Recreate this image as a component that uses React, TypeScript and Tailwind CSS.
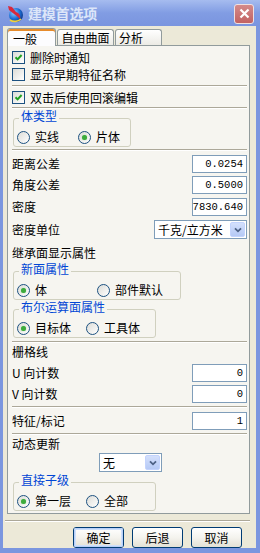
import React from "react";

const font = "font-['Noto_Sans_CJK_SC','Noto_Sans',sans-serif]";

function CheckBox({ checked }: { checked: boolean }) {
  return (
    <span className="relative w-[13px] h-[13px] shrink-0 border border-[#1c5180] bg-gradient-to-br from-[#dcdcd7] to-white">
      {checked && (
        <svg className="absolute left-[1px] top-[1px]" width="9" height="9" viewBox="0 0 9 9">
          <path d="M1.5 4.2 L3.6 6.4 L7.6 2" stroke="#21a121" strokeWidth="2" fill="none" />
        </svg>
      )}
    </span>
  );
}

function Check({ label, checked }: { label: string; checked: boolean }) {
  return (
    <div className="h-[17px] flex items-center pl-[4px] gap-[5px]">
      <CheckBox checked={checked} />
      <span className="leading-none">{label}</span>
    </div>
  );
}

function Radio({ label, checked, w }: { label: string; checked: boolean; w: string }) {
  return (
    <div className={`flex items-center gap-[5px] ${w}`}>
      <span className="relative w-[13px] h-[13px] rounded-full border border-[#1c5180] bg-gradient-to-br from-[#dcdcd7] to-white flex items-center justify-center shrink-0">
        {checked && <span className="w-[5px] h-[5px] rounded-full bg-[#3dab3d] shadow-[0_0_1px_#7fd07f]" />}
      </span>
      <span className="leading-none">{label}</span>
    </div>
  );
}

function Group({ title, w, mt, children }: { title: string; w: string; mt: string; children: React.ReactNode }) {
  return (
    <div className={`relative ${w} ${mt} ml-[5px] h-[29px] border border-[#d0d0bf] rounded-[3px] pt-[9px] pl-[3px] flex`}>
      <span className="absolute left-[5px] top-[-9px] px-[2px] bg-[#f6f5f0] text-[#0046d5] leading-none">{title}</span>
      {children}
    </div>
  );
}

function Sep({ mt }: { mt: string }) {
  return <div className={`${mt} ml-[4px] mr-[1px] h-[2px] border-t border-[#aca899] border-b border-b-white`} />;
}

function InputRow({ label, value, mt }: { label: string; value: string; mt: string }) {
  return (
    <div className={`flex items-center justify-between ${mt} pl-[4px] pr-[1px]`}>
      <span className="leading-none">{label}</span>
      <div className="w-[55px] h-[18px] border border-[#7f9db9] bg-white flex items-center justify-end pr-[3px] font-['Liberation_Mono',monospace] text-[10.5px] leading-none">
        {value}
      </div>
    </div>
  );
}

function Select({ value, w, h }: { value: string; w: string; h: string }) {
  return (
    <div className={`${w} ${h} border border-[#7f9db9] bg-white flex items-center justify-between pl-[3px] pr-[1px]`}>
      <span className="leading-none">{value}</span>
      <span className="w-[15px] h-[calc(100%-2px)] rounded-[2px] bg-gradient-to-b from-[#d4e0fc] to-[#b5c9f5] border border-[#c3d3fd] flex items-center justify-center">
        <svg width="8" height="6" viewBox="0 0 8 6">
          <path d="M1 1.3 L4 4.3 L7 1.3" stroke="#4d6185" strokeWidth="1.8" fill="none" />
        </svg>
      </span>
    </div>
  );
}

function Btn({ label, def }: { label: string; def?: boolean }) {
  return (
    <div className="w-[51px] h-[21px] rounded-[3px] border border-[#003c74] bg-gradient-to-b from-white via-[#f4f3ee] to-[#e3e1d5] flex items-center justify-center">
      <div className={`w-full h-full rounded-[2px] flex items-center justify-center leading-none ${def ? "shadow-[inset_0_0_0_1px_#b8d0f8,inset_0_0_0_2px_#cee0fb]" : ""}`}>
        {label}
      </div>
    </div>
  );
}

function Icon() {
  return (
    <svg width="17" height="19" viewBox="0 0 17 19">
      <defs>
        <radialGradient id="g" cx="0.35" cy="0.35" r="0.7">
          <stop offset="0" stopColor="#8fd0ff" />
          <stop offset="0.6" stopColor="#1d6fd6" />
          <stop offset="1" stopColor="#0c3a8a" />
        </radialGradient>
      </defs>
      <circle cx="9" cy="11" r="7" fill="url(#g)" />
      <path d="M13 15 C14 12 12 9 9 8 L5 3 L1 2 L2 6 L7 10 C9 11 11 13 13 15Z" fill="#d8283c" />
      <path d="M3 16 C6 18 11 18 14 15" stroke="#f2d23a" strokeWidth="1.6" fill="none" />
    </svg>
  );
}

export default function App() {
  return (
    <div className={`w-[260px] h-[553px] bg-[#7b96df] flex flex-col text-[12px] text-black ${font}`}>
      <div className="h-[26px] shrink-0 bg-gradient-to-b from-[#a6bcef] via-[#819ce3] to-[#7a95df] flex items-center pl-[7px] pr-[6px]">
        <Icon />
        <span className="ml-[4px] text-[14px] font-bold text-[#dce6f9] leading-none tracking-[-0.2px]">建模首选项</span>
        <div className="ml-auto mt-[1px] w-[20px] h-[20px] rounded-[3px] border border-[#f0e0e0] bg-gradient-to-b from-[#d48a8a] to-[#c26262] flex items-center justify-center">
          <svg width="11" height="11" viewBox="0 0 11 11">
            <path d="M1.5 1.5 L9.5 9.5 M9.5 1.5 L1.5 9.5" stroke="white" strokeWidth="2.2" />
          </svg>
        </div>
      </div>
      <div className="flex-1 ml-[3px] mr-[4px] mb-[5px] bg-[#ece9d8] flex flex-col">
        <div className="h-[18px] flex items-end pl-[4px] mt-[1px]">
          <div className="w-[49px] h-[18px] border border-[#919b9c] border-b-0 rounded-t-[3px] bg-[#fcfcfe] shadow-[inset_0_2px_0_#e68b2c] flex items-center pl-[5px] relative z-10 mb-[-1px] pt-[2px]">
            <span className="leading-none">一般</span>
          </div>
          <div className="w-[57px] h-[16px] border border-[#919b9c] border-b-0 rounded-t-[3px] bg-gradient-to-b from-white to-[#ecebe5] flex items-center justify-center ml-[1px]">
            <span className="leading-none">自由曲面</span>
          </div>
          <div className="w-[47px] h-[16px] border border-[#919b9c] border-b-0 rounded-t-[3px] bg-gradient-to-b from-white to-[#ecebe5] flex items-center pl-[3px] ml-[1px]">
            <span className="leading-none">分析</span>
          </div>
        </div>
        <div className="ml-[4px] mr-[6px] h-[469px] border border-[#919b9c] bg-[#f6f5f0] flex flex-col pt-[3px] pr-[1px]">
          <Check label="删除时通知" checked />
          <Check label="显示早期特征名称" checked={false} />
          <Sep mt="mt-[2px]" />
          <div className="mt-[2px]">
            <Check label="双击后使用回滚编辑" checked />
          </div>
          <Sep mt="mt-[1px]" />
          <Group title="体类型" w="w-[118px]" mt="mt-[9px]">
            <Radio label="实线" checked={false} w="w-[61px]" />
            <Radio label="片体" checked w="" />
          </Group>
          <Sep mt="mt-[2px]" />
          <InputRow label="距离公差" value="0.0254" mt="mt-[4px]" />
          <InputRow label="角度公差" value="0.5000" mt="mt-[3px]" />
          <InputRow label="密度" value="7830.640" mt="mt-[4px]" />
          <div className="flex items-center justify-between mt-[4px] pl-[4px] pr-[1px]">
            <span className="leading-none">密度单位</span>
            <Select value="千克/立方米" w="w-[93px]" h="h-[19px]" />
          </div>
          <div className="mt-[6px] h-[16px] flex items-center pl-[4px]">
            <span className="leading-none">继承面显示属性</span>
          </div>
          <Group title="新面属性" w="w-[168px]" mt="mt-[10px]">
            <Radio label="体" checked w="w-[80px]" />
            <Radio label="部件默认" checked={false} w="" />
          </Group>
          <Group title="布尔运算面属性" w="w-[143px]" mt="mt-[9px]">
            <Radio label="目标体" checked w="w-[69px]" />
            <Radio label="工具体" checked={false} w="" />
          </Group>
          <Sep mt="mt-[3px]" />
          <div className="mt-[1px] h-[16px] flex items-center pl-[4px]">
            <span className="leading-none">栅格线</span>
          </div>
          <InputRow label="U 向计数" value="0" mt="mt-[4px]" />
          <InputRow label="V 向计数" value="0" mt="mt-[3px]" />
          <Sep mt="mt-[3px]" />
          <InputRow label="特征/标记" value="1" mt="mt-[4px]" />
          <Sep mt="mt-[3px]" />
          <div className="mt-[1px] h-[16px] flex items-center pl-[4px]">
            <span className="leading-none">动态更新</span>
          </div>
          <div className="mt-[1px] pl-[91px]">
            <Select value="无" w="w-[63px]" h="h-[19px]" />
          </div>
          <Group title="直接子级" w="w-[143px]" mt="mt-[10px]">
            <Radio label="第一层" checked w="w-[69px]" />
            <Radio label="全部" checked={false} w="" />
          </Group>
        </div>
        <div className="mt-[6px] ml-[2px] mr-[6px] h-[2px] border-t border-[#aca899] border-b border-b-white" />
        <div className="mt-[5px] flex justify-end gap-[8px] pr-[14px]">
          <Btn label="确定" def />
          <Btn label="后退" />
          <Btn label="取消" />
        </div>
      </div>
    </div>
  );
}
